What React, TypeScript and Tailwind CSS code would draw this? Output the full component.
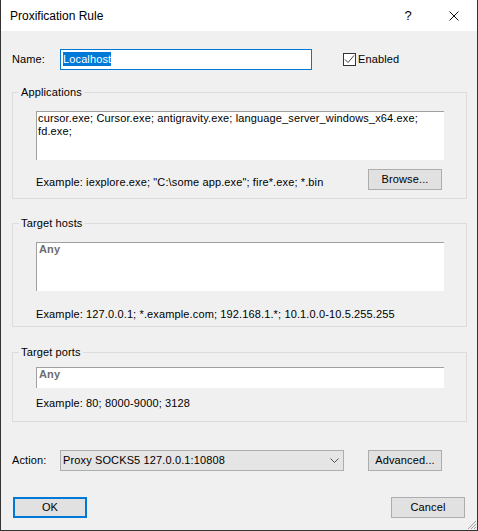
import React from 'react';

const btn =
    "h-[21px] w-[74px] flex items-center justify-center bg-[#e1e1e1] border border-[#adadad] text-black";

function Group({ title, children, className }: { title: string; children: React.ReactNode; className?: string }) {
    return (
        <div className={`relative border border-[#dcdcdc] pl-[23px] ${className ?? ""}`}>
            <span className="absolute left-[6px] -top-[7px] px-[2px] bg-[#f0f0f0] leading-[13px] text-black">
                {title}
            </span>
            {children}
        </div>
    );
}

export default function App() {
    return (
        <div className="relative w-[478px] h-[531px] flex flex-col border-x border-b border-[#333333] bg-[#f0f0f0] font-['Liberation_Sans',Arial,sans-serif] text-[11px] leading-[13px] tracking-[0.13px] text-black select-none">
            {/* Title bar */}
            <div className="h-[31px] shrink-0 bg-white flex items-center pl-[9px] tracking-normal">
                <span className="text-[12px] leading-[14px]">Proxification Rule</span>
                <div className="ml-auto flex h-full">
                    <div className="w-[46px] h-full flex items-center justify-center text-[13px]">?</div>
                    <div className="w-[46px] h-full flex items-center justify-center">
                        <svg width="10" height="10" viewBox="0 0 10 10">
                            <path d="M0.5 0.5 L9.5 9.5 M9.5 0.5 L0.5 9.5" stroke="#111" strokeWidth="1" />
                        </svg>
                    </div>
                </div>
            </div>

            {/* Body */}
            <div className="flex flex-col pl-[11px] pr-[10px]">
                {/* Name row */}
                <div className="mt-[18px] h-[21px] flex items-center">
                    <span className="w-[48px]">Name:</span>
                    <div className="w-[252px] h-[21px] bg-white border border-[#0078d7] pl-[2px] pt-[2px]">
                        <span className="inline-block bg-[#0078d7] text-white leading-[14px]">Localhost</span>
                    </div>
                    <div className="ml-[31px] flex items-center">
                        <div className="w-[13px] h-[13px] border border-[#333333] bg-white flex items-center justify-center">
                            <svg width="11" height="11" viewBox="0 0 11 11">
                                <path d="M1 5.5 L4 8.5 L10 1.5" fill="none" stroke="#444" strokeWidth="1" />
                            </svg>
                        </div>
                        <span className="ml-[2px]">Enabled</span>
                    </div>
                </div>

                {/* Applications */}
                <Group title="Applications" className="mt-[22px] pt-[18px] pb-[8px]">
                    <div className="w-[408px] flex flex-col">
                        <div className="h-[49px] bg-white border-t border-l border-[#a0a0a0] pl-[1px]">
                            cursor.exe; Cursor.exe; antigravity.exe; language_server_windows_x64.exe;
                            <br />
                            fd.exe;
                        </div>
                        <div className="mt-[9px] flex items-start justify-between">
                            <span className="pt-[7px]">Example: iexplore.exe; "C:\some app.exe"; fire*.exe; *.bin</span>
                            <button className={`${btn} mr-[2px]`}>Browse...</button>
                        </div>
                    </div>
                </Group>

                {/* Target hosts */}
                <Group title="Target hosts" className="mt-[24px] pt-[18px] pb-[5px]">
                    <div className="w-[408px] flex flex-col">
                        <div className="h-[49px] bg-white border-t border-l border-[#a0a0a0] pl-[2px] font-bold text-[#6d6d6d]">
                            Any
                        </div>
                        <span className="mt-[17px]">Example: 127.0.0.1; *.example.com; 192.168.1.*; 10.1.0.0-10.5.255.255</span>
                    </div>
                </Group>

                {/* Target ports */}
                <Group title="Target ports" className="mt-[25px] pt-[14px] pb-[11px]">
                    <div className="w-[408px] flex flex-col">
                        <div className="h-[21px] bg-white border-t border-l border-[#a0a0a0] pl-[2px] font-bold text-[#6d6d6d]">
                            Any
                        </div>
                        <span className="mt-[9px]">Example: 80; 8000-9000; 3128</span>
                    </div>
                </Group>

                {/* Action row */}
                <div className="mt-[28px] h-[21px] flex items-center">
                    <span className="w-[48px]">Action:</span>
                    <div className="w-[284px] h-[21px] bg-[#e5e5e5] border border-[#adadad] flex items-center pl-[2px] pr-[4px]">
                        <span>Proxy SOCKS5 127.0.0.1:10808</span>
                        <svg className="ml-auto" width="9" height="5" viewBox="0 0 9 5">
                            <path d="M0.5 0.5 L4.5 4.5 L8.5 0.5" fill="none" stroke="#555" strokeWidth="1" />
                        </svg>
                    </div>
                    <button className={`${btn} ml-[24px] w-[73px]`}>Advanced...</button>
                </div>

                {/* Buttons */}
                <div className="mt-[26px] flex justify-between">
                    <button className="ml-[1px] h-[21px] w-[74px] flex items-center justify-center bg-[#e1e1e1] border-2 border-[#0078d7]">OK</button>
                    <button className={`${btn} w-[73px] mr-[2px]`}>Cancel</button>
                </div>
            </div>

            {/* Size grip */}
            <svg className="absolute right-0 bottom-0" width="12" height="12" viewBox="0 0 12 12">
                <path d="M11 3 L3 11 M11 6 L6 11 M11 9 L9 11" stroke="#a0a0a0" strokeWidth="1" />
            </svg>
        </div>
    );
}
